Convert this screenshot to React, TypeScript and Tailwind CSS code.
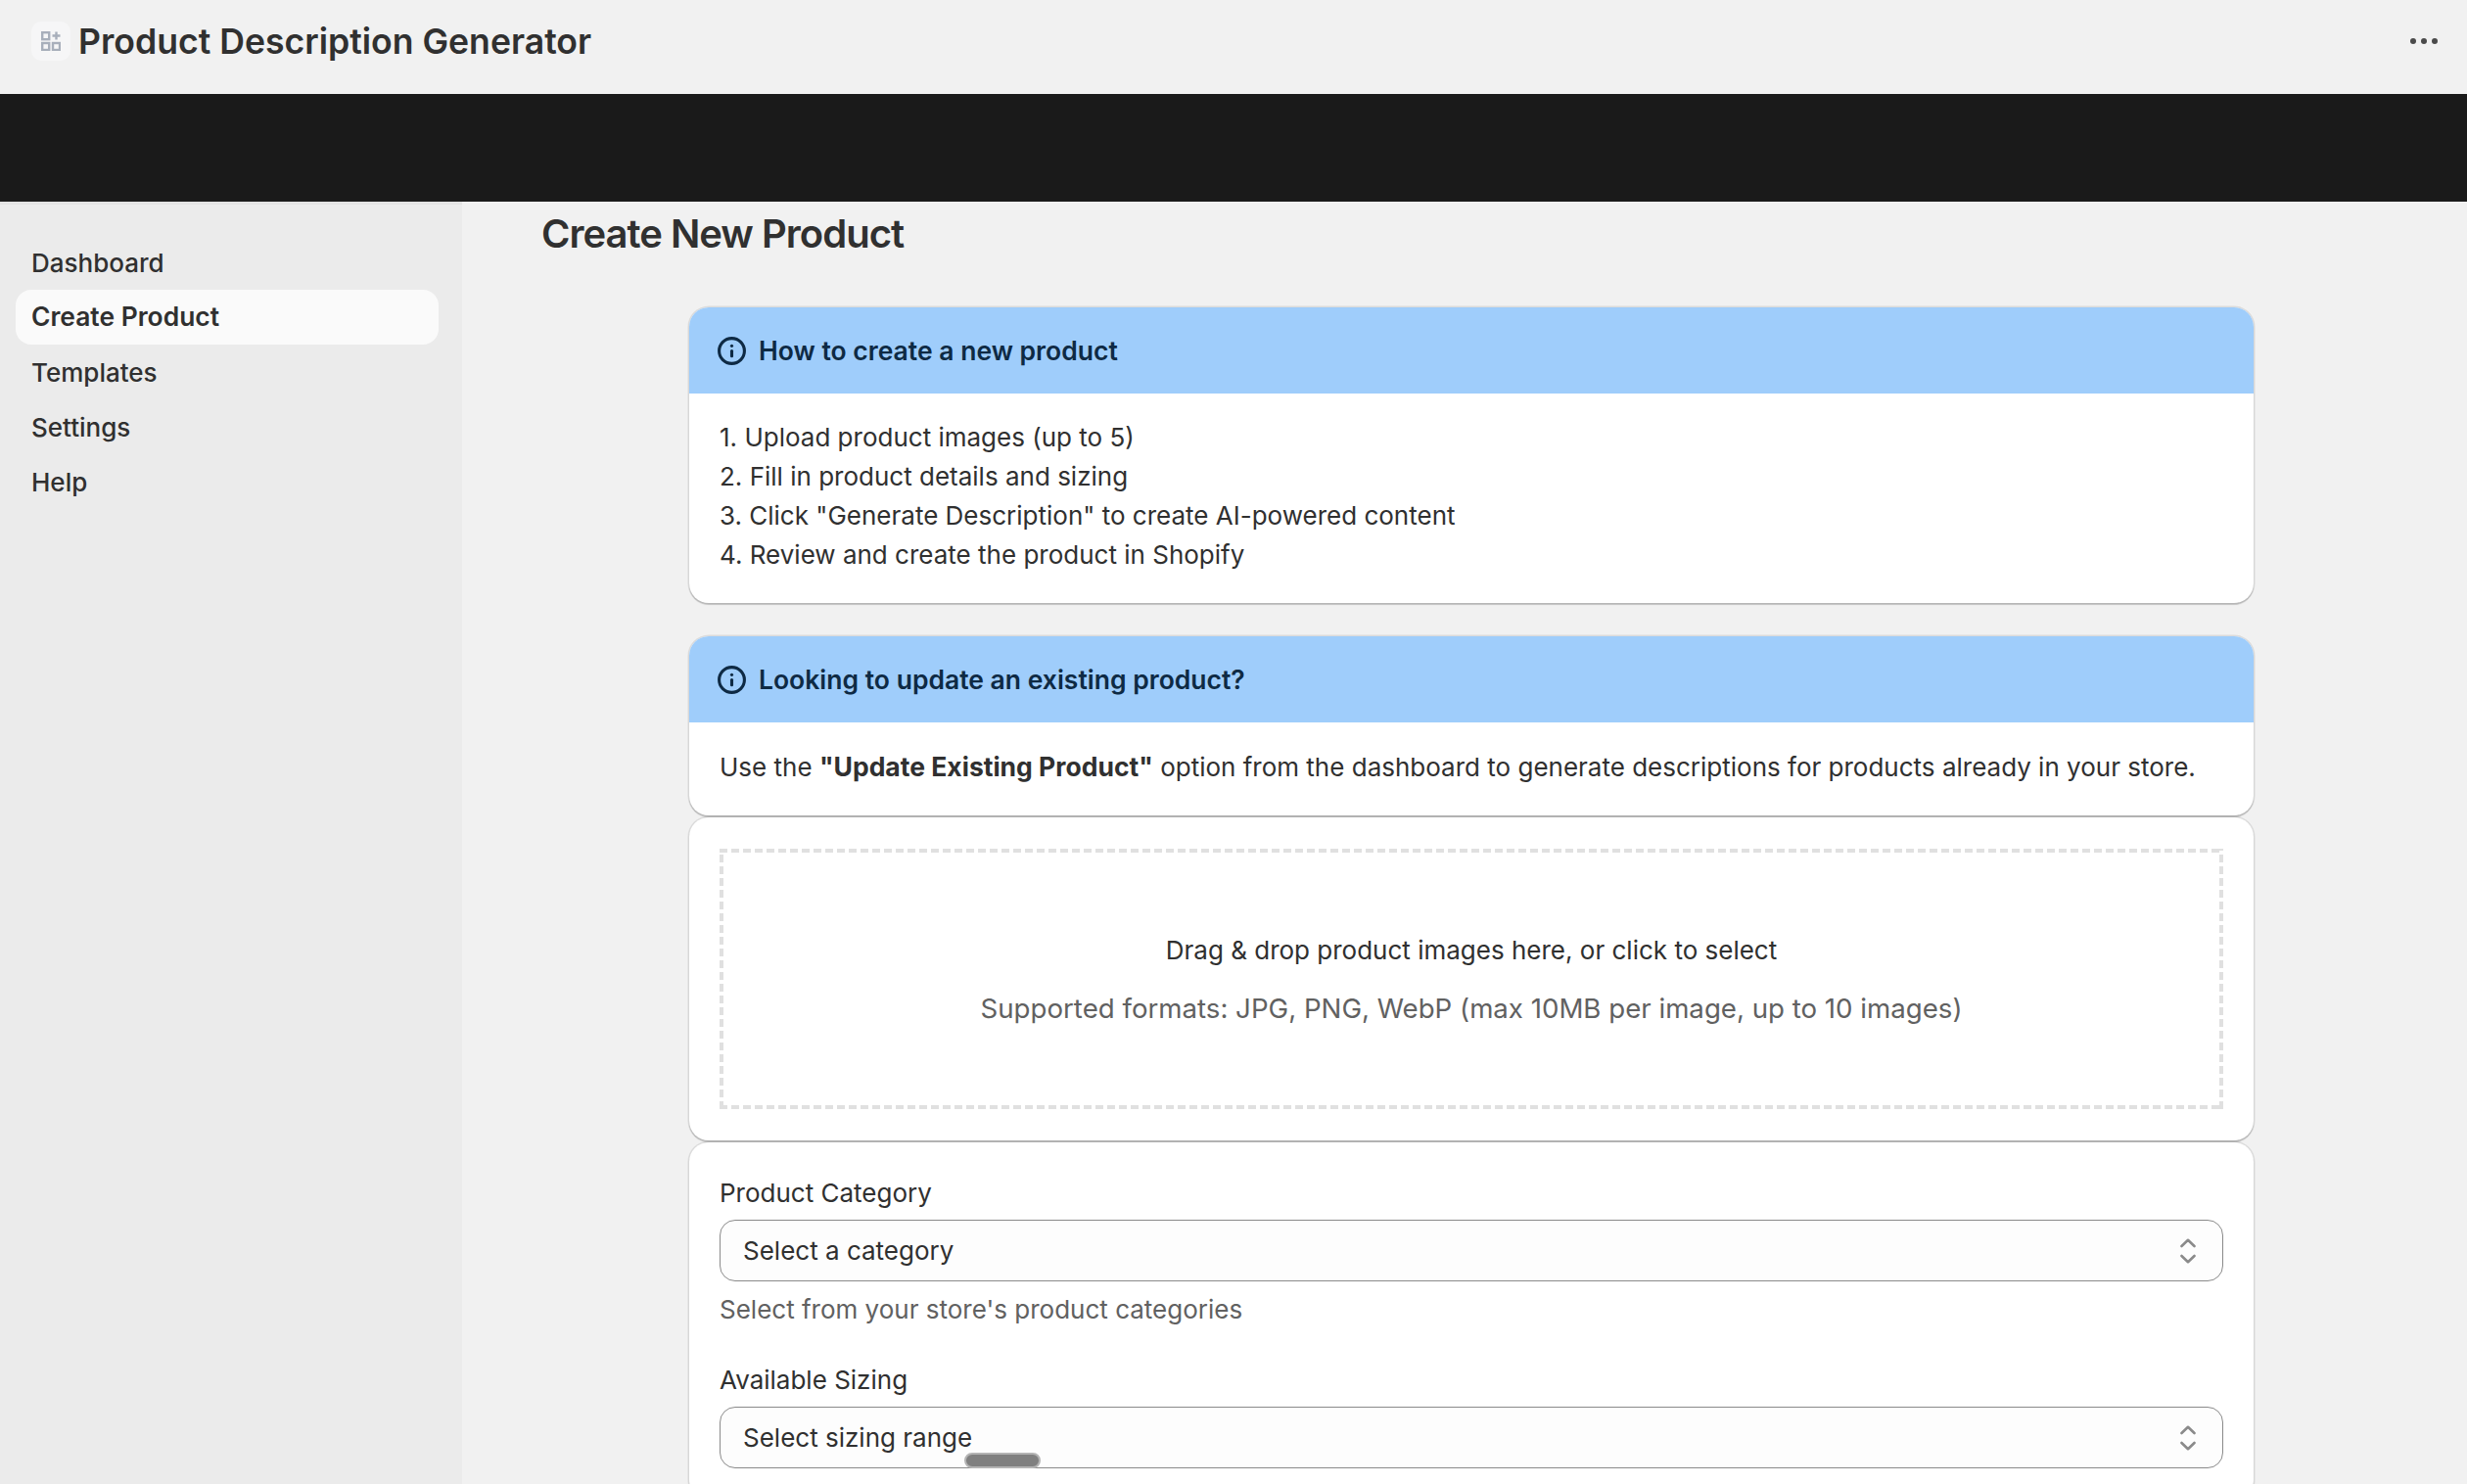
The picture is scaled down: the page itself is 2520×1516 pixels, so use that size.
import { Info } from 'lucide-react';

const navItems = ['Dashboard', 'Create Product', 'Templates', 'Settings', 'Help'];

const steps = [
  '1. Upload product images (up to 5)',
  '2. Fill in product details and sizing',
  '3. Click "Generate Description" to create AI-powered content',
  '4. Review and create the product in Shopify',
];

const cardClass =
  'rounded-[20px] overflow-hidden bg-white shadow-[0_0_0_1.5px_rgba(0,0,0,0.09),0_2px_1px_rgba(0,0,0,0.16)]';

const AppIcon = () => (
  <div className="w-10 h-10 rounded-[10px] bg-[#f6f6f7] flex items-center justify-center">
    <svg width="20" height="20" viewBox="0 0 20 20" fill="none" stroke="#a8afbb" strokeWidth="2.4">
      <rect x="1.2" y="1.2" width="7" height="7" />
      <rect x="1.2" y="12" width="7" height="7" />
      <rect x="12" y="12" width="7" height="7" />
      <path d="M15.5 0.5v8M11.5 4.5h8" />
    </svg>
  </div>
);

const Chevrons = () => (
  <svg width="16" height="26" viewBox="0 0 16 26" fill="none" stroke="#8a8a8a" strokeWidth="2.6" strokeLinecap="round" strokeLinejoin="round">
    <path d="M1.5 8 8 1.8 14.5 8" />
    <path d="M1.5 18 8 24.2 14.5 18" />
  </svg>
);

const InfoCard = ({ title, children }: { title: string; children: React.ReactNode }) => (
  <div className={cardClass}>
    <div className="h-[88px] bg-[#9fcdfb] flex items-center gap-3 pl-[28px]">
      <Info size={31} strokeWidth={2.4} className="text-[#0e2a44]" />
      <h2 className="mt-[1px] text-[26.5px] font-semibold text-[#0e2a44]">{title}</h2>
    </div>
    <div className="px-[31px] pt-[25px] pb-[29px] text-[26px] leading-[40px] text-[#303030]">{children}</div>
  </div>
);

const SelectField = ({ label, value, help }: { label: string; value: string; help?: string }) => (
  <div>
    <div className="text-[26px] leading-[40px] text-[#303030] mb-[7px]">{label}</div>
    <div className="h-[63px] rounded-[16px] border-[1.5px] border-[#8a8a8a] bg-[#fdfdfd] flex items-center justify-between pl-[23px] pr-[27px]">
      <span className="text-[26px] text-[#303030]">{value}</span>
      <Chevrons />
    </div>
    {help && <div className="mt-[9px] text-[26px] leading-[40px] text-[#616161]">{help}</div>}
  </div>
);

export default function App() {
  return (
    <div className="relative h-[1516px] w-full overflow-hidden flex flex-col bg-[#f1f1f1] [font-family:Inter,sans-serif]">
      <header className="h-24 shrink-0 flex items-center justify-between pl-8 pr-[30px] pb-3">
        <div className="flex items-center gap-2">
          <AppIcon />
          <h1 className="mt-[2px] text-[35.6px] font-semibold text-[#303030]">Product Description Generator</h1>
        </div>
        <div className="flex gap-[5px]">
          <span className="w-[6px] h-[6px] rounded-full bg-[#4a4a4a]" />
          <span className="w-[6px] h-[6px] rounded-full bg-[#4a4a4a]" />
          <span className="w-[6px] h-[6px] rounded-full bg-[#4a4a4a]" />
        </div>
      </header>

      <div className="h-[110px] shrink-0 bg-[#1a1a1a]" />

      <div className="flex flex-1 min-h-0">
        <aside className="w-[472px] shrink-0 bg-[#ebebeb] border-t-[3px] border-[#e3e3e3] pt-[31px] pl-4 pr-6">
          {navItems.map((item) => (
            <div
              key={item}
              className={
                item === 'Create Product'
                  ? 'h-14 rounded-[16px] bg-[#fafafa] flex items-center pl-4 text-[26.4px] font-semibold text-[#303030]'
                  : 'h-14 flex items-center pl-4 text-[26px] font-medium text-[#303030]'
              }
            >
              {item}
            </div>
          ))}
        </aside>

        <main className="flex-1 min-w-0 pt-[9px]">
          <h1 className="ml-[81px] text-[40px] leading-[48px] font-semibold tracking-[-1px] text-[#303030]">Create New Product</h1>

          <div className="ml-[232px] w-[1598px] mt-[51px]">
            <InfoCard title="How to create a new product">
              {steps.map((step) => (
                <div key={step}>{step}</div>
              ))}
            </InfoCard>

            <div className="mt-[34px]">
              <InfoCard title="Looking to update an existing product?">
                Use the <strong className="font-bold text-[26.5px]">"Update Existing Product"</strong> option from the dashboard to generate descriptions for products already in your store.
              </InfoCard>
            </div>

            <div className={`${cardClass} mt-[2px] h-[330px] py-8 px-[31px]`}>
              <div className="h-full flex flex-col items-center justify-center gap-[19px] [background:repeating-linear-gradient(90deg,#e0e0e0_0_8px,transparent_8px_12px)_top/100%_4px_no-repeat,repeating-linear-gradient(90deg,#e0e0e0_0_8px,transparent_8px_12px)_bottom/100%_4px_no-repeat,repeating-linear-gradient(0deg,#e0e0e0_0_8px,transparent_8px_12px)_left/4px_100%_no-repeat,repeating-linear-gradient(0deg,#e0e0e0_0_8px,transparent_8px_12px)_right/4px_100%_no-repeat]">
                <div className="text-[26px] leading-[40px] text-[#303030]">Drag &amp; drop product images here, or click to select</div>
                <div className="text-[27.65px] leading-[40px] text-[#616161]">Supported formats: JPG, PNG, WebP (max 10MB per image, up to 10 images)</div>
              </div>
            </div>

            <div className={`${cardClass} mt-[2px] pt-8 px-[31px] pb-8 flex flex-col gap-8`}>
              <SelectField label="Product Category" value="Select a category" help="Select from your store's product categories" />
              <SelectField label="Available Sizing" value="Select sizing range" />
            </div>
          </div>
        </main>
      </div>

      <div className="absolute left-[985px] top-[1484px] w-[78px] h-[16px] rounded-full bg-[#808080] border-2 border-[#b4b4b4]" />
    </div>
  );
}
